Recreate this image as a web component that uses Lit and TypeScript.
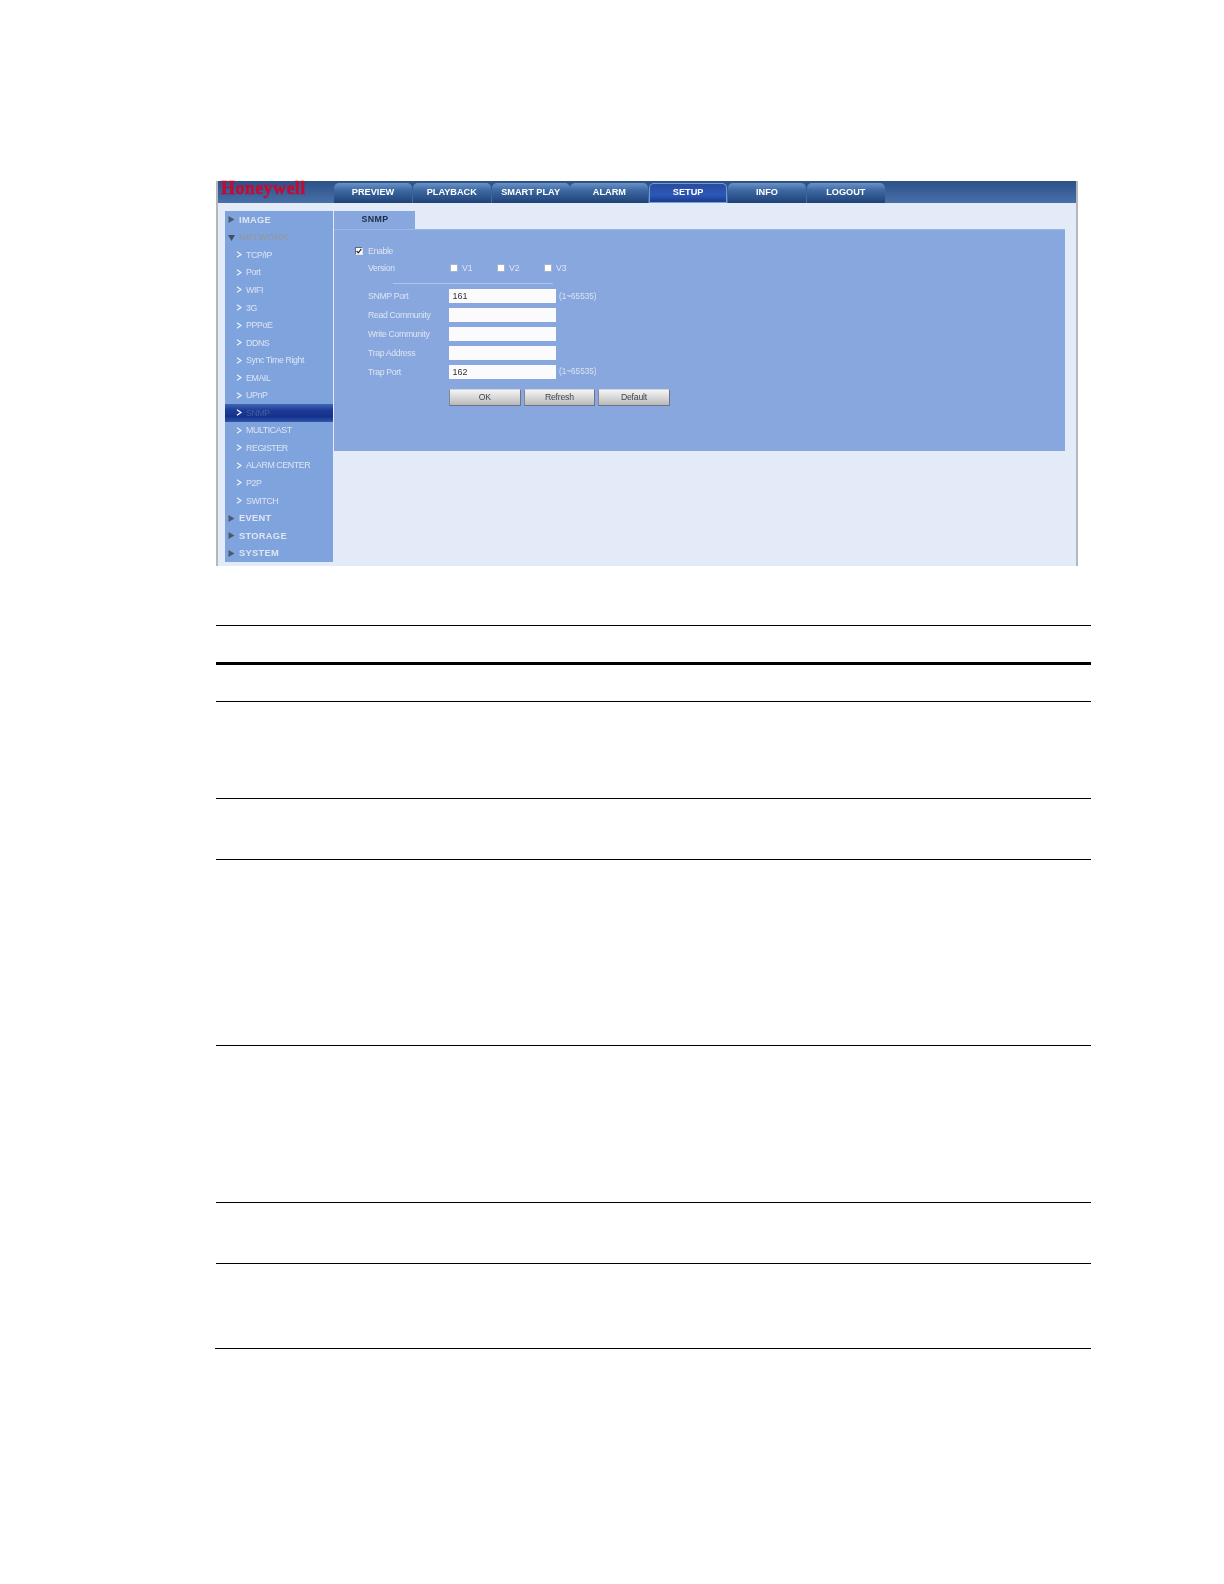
import { LitElement, html, css, svg } from "lit";
import { customElement } from "lit/decorators.js";

const TABS = ["PREVIEW", "PLAYBACK", "SMART PLAY", "ALARM", "SETUP", "INFO", "LOGOUT"];
type Item = { t: string; kind: "sec" | "sub"; open?: boolean; active?: boolean };
const NAV: Item[] = [
  { t: "IMAGE", kind: "sec" },
  { t: "NETWORK", kind: "sec", open: true },
  ...["TCP/IP", "Port", "WIFI", "3G", "PPPoE", "DDNS", "Sync Time Right", "EMAIL", "UPnP"].map((t) => ({ t, kind: "sub" as const })),
  { t: "SNMP", kind: "sub", active: true },
  ...["MULTICAST", "REGISTER", "ALARM CENTER", "P2P", "SWITCH"].map((t) => ({ t, kind: "sub" as const })),
  { t: "EVENT", kind: "sec" },
  { t: "STORAGE", kind: "sec" },
  { t: "SYSTEM", kind: "sec" },
];
const FIELDS = [
  { l: "SNMP Port", v: "161", h: "(1~65535)" },
  { l: "Read Community", v: "", h: "" },
  { l: "Write Community", v: "", h: "" },
  { l: "Trap Address", v: "", h: "" },
  { l: "Trap Port", v: "162", h: "(1~65535)" },
];
const ROWS = ["r38", "r38b", "r97", "r61", "r186", "r157", "r61", "r85"];

const chevron = svg`<svg class="chev" viewBox="0 0 6 7"><path d="M1 .8 5 3.5 1 6.2" fill="none" stroke="currentColor" stroke-width="1.3"/></svg>`;
const tri = (open?: boolean) =>
  open
    ? svg`<svg class="tri" viewBox="0 0 7 7"><path d="M0 1h7L3.5 7z" fill="#44505f"/></svg>`
    : svg`<svg class="tri" viewBox="0 0 7 7"><path d="M.5 0 6.5 3.5.5 7z" fill="#4e5a6b"/></svg>`;

@customElement("app-root")
export class AppRoot extends LitElement {
  static styles = css`
    :host { display: block; width: 1224px; height: 1584px; background: #fff; font-family: "Liberation Sans", Arial, sans-serif; overflow: hidden; }
    .page { display: flex; flex-direction: column; padding: 181px 0 0 216px; }
    .frame { width: 862px; height: 385px; box-sizing: border-box; border-left: 2px solid #b4b7bc; border-right: 2px solid #b4b7bc; background: #e3eaf8; filter: blur(.45px); display: flex; flex-direction: column; }
    .top { height: 22px; flex: none; display: flex; align-items: flex-end; background: linear-gradient(#2c5088, #4870a8); }
    .logo { width: 116px; box-sizing: border-box; padding-left: 3px; align-self: flex-start; font: bold 18px/15px "Liberation Serif", serif; color: #c00d35; letter-spacing: .4px; -webkit-text-stroke: .5px #c00d35; white-space: nowrap; }
    .tabs { display: flex; gap: .8px; }
    .tab { width: 78px; height: 20px; box-sizing: border-box; border-radius: 5px 5px 0 0; background: linear-gradient(#6a93c6 0, #3f6aa3 35%, #1f4278); color: #fff; font: bold 9.2px/18px "Liberation Sans", sans-serif; text-align: center; }
    .tab.on { background: linear-gradient(#2a4ba0, #2c58b8 60%, #1c3a8c); border: 1px solid #6f9ad8; border-bottom-color: #7aa2dc; line-height: 16px; }
    .body { flex: 1; display: flex; padding: 8px 11px 0 7px; }
    .side { width: 108px; height: 351px; flex: none; background: #7fa3dd; display: flex; flex-direction: column; }
    .item { height: 17.55px; flex: none; display: flex; align-items: center; color: #dde5f3; font-size: 8.8px; letter-spacing: -.4px; box-sizing: border-box; white-space: nowrap; }
    .sub { padding-left: 11px; gap: 4px; }
    .sec { padding-left: 3px; gap: 4px; font-weight: bold; font-size: 9.3px; letter-spacing: .3px; }
    .closed-text { color: #dfe5f1; }
    .dim { color: #8e9aad; }
    .active { background: linear-gradient(#3f66b4 0, #1d3b96 35%, #16318c 70%, #3056ac); color: #3c5f9e; }
    .active .chev { color: #fff; }
    .chev { width: 6px; height: 7px; color: #eef2f8; flex: none; }
    .tri { width: 7px; height: 7px; flex: none; }
    .main { flex: 1; margin-left: 1px; display: flex; flex-direction: column; }
    .mtab { width: 81px; height: 18px; flex: none; background: #87a7de; color: #1d2c44; font: bold 8.8px/17px "Liberation Sans", sans-serif; letter-spacing: .4px; text-align: center; box-sizing: border-box; padding-left: 1px; }
    .panel { height: 222px; flex: none; background: #87a7de; box-sizing: border-box; border-top: 1px solid #9cb8e4; padding: 12px 0 0 34px; color: #dde5f2; font-size: 8.7px; letter-spacing: -.33px; }
    .line { height: 17.6px; display: flex; align-items: center; }
    .enable { margin-left: -13px; gap: 5px; }
    .cb { width: 8px; height: 8px; flex: none; box-sizing: border-box; background: #fff; border: 1px solid #5c6a80; border-right-color: #dfe4ec; border-bottom-color: #dfe4ec; }
    .cb svg { display: block; width: 6px; height: 6px; }
    .cb.plain { border-color: #a7b4c8; }
    .lab { width: 81px; flex: none; white-space: nowrap; }
    .vers { display: flex; margin-left: 1px; }
    .ver { width: 47px; display: flex; align-items: center; gap: 4px; font-size: 8.7px; letter-spacing: 0; }
    .sep { width: 160px; height: 1px; background: #b0c4e6; margin: 6px 0 5px 25px; }
    .fields { display: flex; flex-direction: column; gap: 4.95px; }
    .f { display: flex; align-items: center; height: 14px; }
    .inp { width: 107px; height: 14px; box-sizing: border-box; background: #fbfbfd; color: #333; font-size: 9px; letter-spacing: 0; line-height: 14px; padding-left: 3.5px; }
    .hint { margin-left: 3px; font-size: 8.2px; letter-spacing: 0; color: #dbe3f0; }
    .btns { display: flex; gap: 3px; margin: 10.5px 0 0 81px; }
    .btn { width: 71.6px; height: 17px; box-sizing: border-box; border: 1px solid #6a7483; border-top-color: #cfd3d8; border-left-color: #7f8894; background: linear-gradient(#f4f4f4, #d8d8d8 50%, #b9b9b9); color: #3c4654; font-size: 8.7px; letter-spacing: -.2px; line-height: 14px; text-align: center; }
    .table { width: 875px; margin-top: 59px; display: flex; flex-direction: column; }
    .row { box-sizing: border-box; border-top: 1px solid #000; }
    .r38 { height: 37px; }
    .r38b { height: 39px; border-top: 3px solid #000; }
    .r97 { height: 97px; }
    .r61 { height: 61px; }
    .r186 { height: 186px; }
    .r157 { height: 157px; }
    .r85 { height: 85px; }
    .end { height: 1px; width: 876px; margin-left: -1px; background: #000; }
  `;

  render() {
    const check = svg`<svg viewBox="0 0 6 6"><path d="M.6 3 2.3 4.8 5.4 .8" fill="none" stroke="#222" stroke-width="1.2"/></svg>`;
    return html`<div class="page">
      <div class="frame">
        <div class="top">
          <div class="logo">Honeywell</div>
          <div class="tabs">
            ${TABS.map((t) => html`<div class="tab ${t === "SETUP" ? "on" : ""}">${t}</div>`)}
          </div>
        </div>
        <div class="body">
          <div class="side">
            ${NAV.map((n) =>
              n.kind === "sec"
                ? html`<div class="item sec ${n.open ? "dim" : "closed-text"}">${tri(n.open)}<span>${n.t}</span></div>`
                : html`<div class="item sub ${n.active ? "active" : ""}">${chevron}<span>${n.t}</span></div>`
            )}
          </div>
          <div class="main">
            <div class="mtab">SNMP</div>
            <div class="panel">
              <div class="line enable"><span class="cb">${check}</span><span>Enable</span></div>
              <div class="line">
                <span class="lab">Version</span>
                <div class="vers">
                  ${["V1", "V2", "V3"].map((v) => html`<div class="ver"><span class="cb plain"></span><span>${v}</span></div>`)}
                </div>
              </div>
              <div class="sep"></div>
              <div class="fields">
                ${FIELDS.map(
                  (f) => html`<div class="f"><span class="lab">${f.l}</span><div class="inp">${f.v}</div>${f.h ? html`<span class="hint">${f.h}</span>` : ""}</div>`
                )}
              </div>
              <div class="btns">
                ${["OK", "Refresh", "Default"].map((b) => html`<div class="btn">${b}</div>`)}
              </div>
            </div>
          </div>
        </div>
      </div>
      <div class="table">
        ${ROWS.map((r) => html`<div class="row ${r}"></div>`)}
        <div class="end"></div>
      </div>
    </div>`;
  }
}
